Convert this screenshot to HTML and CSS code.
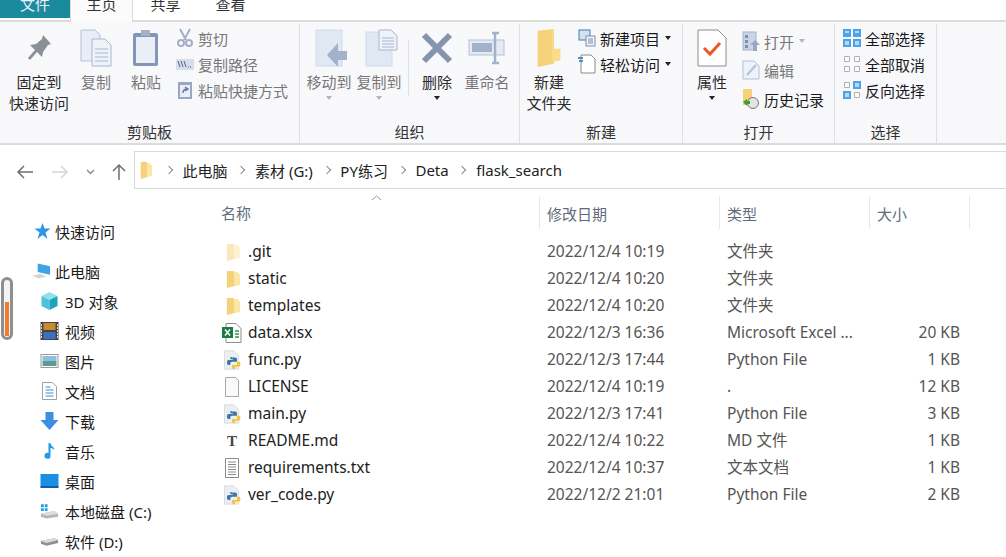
FILE: index.html
```html
<!DOCTYPE html>
<html lang="zh-CN">

<head>
  <meta charset="UTF-8">
  <title>flask_search</title>
  <link rel="stylesheet" href="styles.css">
</head>

<body>
  <svg class="defs" width="0" height="0">
    <defs>
      <symbol id="folder" viewBox="0 0 16 18" preserveAspectRatio="none">
        <path d="M1 1h8l1 2v13l-9 2z" fill="#f5d27a" />
        <path d="M9 2h5v2h2v11l-6 1z" fill="#fbe6a6" />
      </symbol>
      <symbol id="python" viewBox="0 0 24 24">
        <path d="M3 1h11l6 6v16H3z" fill="#eceef1" stroke="#d5d8dc" />
        <path d="M12 9h4a2 2 0 0 1 2 2v3h-6a2 2 0 0 0-2 2v2H8a2 2 0 0 1-2-2v-2a2 2 0 0 1 2-2h5v-1h-3v-1a1 1 0 0 1 2-1z" fill="#3a76a8" />
        <path d="M18 14h3a2 2 0 0 1 1 2v2a2 2 0 0 1-2 2h-4v1a2 2 0 0 1-4 0v-3h5a1 1 0 0 0 1-1z" fill="#f3c63f" />
      </symbol>
    </defs>
  </svg>

  <!-- tabs -->
  <div class="tabs">
    <div class="tab tabFile">文件</div>
    <div class="tab tabActive">主页</div>
    <div class="tab">共享</div>
    <div class="tab">查看</div>
  </div>

  <!-- ribbon -->
  <div class="ribbon">
    <div class="group groupClip">
      <div class="groupBody">
        <div class="bigBtn btnPin">
          <svg width="30" height="32" viewBox="0 0 30 32">
            <path d="M19 3l8 9-3 1-5 7-1 5-5-5-7 8-2-2 7-8-5-5 6-1 6-5z" fill="#8b9097" />
          </svg>
          <span>固定到<br>快速访问</span>
        </div>
        <div class="bigBtn btnWide off">
          <svg width="32" height="38" viewBox="0 0 32 38">
            <path d="M1 1h14l5 5v26H1z" fill="#e8edf6" stroke="#b6c2d6" />
            <path d="M12 10h13l6 6v21H12z" fill="#eef2f9" stroke="#a9b7cf" />
            <path d="M15 20h13M15 24h13M15 28h13M15 32h13" stroke="#a9b7cf" />
          </svg>
          <span>复制</span>
        </div>
        <div class="bigBtn btnWide off">
          <svg width="28" height="38" viewBox="0 0 28 38">
            <rect x="1" y="4" width="25" height="33" rx="2" fill="#8496b8" />
            <rect x="4" y="8" width="19" height="26" fill="#e9eef7" />
            <rect x="9" y="1" width="9" height="6" fill="#a4b1c9" />
          </svg>
          <span>粘贴</span>
        </div>
        <div class="smallCol colClip off">
          <div class="smallBtn">
            <svg width="16" height="20" viewBox="0 0 16 20">
              <path d="M3 1l6 11M13 1L7 12" stroke="#a3b0c6" stroke-width="2" fill="none" />
              <circle cx="4" cy="15" r="3" fill="none" stroke="#a3b0c6" stroke-width="2" />
              <circle cx="12" cy="15" r="3" fill="none" stroke="#a3b0c6" stroke-width="2" />
            </svg>
            <span>剪切</span>
          </div>
          <div class="smallBtn">
            <svg width="18" height="12" viewBox="0 0 18 12">
              <rect width="18" height="11" y="1" fill="#d5deec" />
              <path d="M2 3l2 6M5 3l2 6M8 3l2 6" stroke="#59657c" fill="none" />
              <path d="M12 9h1M14 9h1" stroke="#59657c" />
            </svg>
            <span>复制路径</span>
          </div>
          <div class="smallBtn">
            <svg width="16" height="20" viewBox="0 0 16 20">
              <rect x="1" y="2" width="14" height="17" fill="#98a8c4" />
              <rect x="3" y="5" width="10" height="12" fill="#e9eef7" />
              <path d="M6 13c0-3 2-4 4-4M8 7l3 2-3 2" stroke="#6b7c9c" stroke-width="1.5" fill="none" />
            </svg>
            <span>粘贴快捷方式</span>
          </div>
        </div>
      </div>
      <div class="groupName">剪贴板</div>
    </div>

    <div class="group groupOrg">
      <div class="groupBody">
        <div class="bigBtn btnOrg off">
          <svg width="34" height="38" viewBox="0 0 34 38">
            <rect x="1" y="1" width="26" height="36" fill="#dfe8f3" stroke="#d0dce9" />
            <path d="M12 26l11-12v8h9v9h-9v7z" fill="#a3b1ca" />
          </svg>
          <span>移动到</span>
          <i class="caret caretOff"></i>
        </div>
        <div class="bigBtn btnOrg off">
          <svg width="34" height="38" viewBox="0 0 34 38">
            <rect x="1" y="3" width="26" height="34" fill="#dfe8f3" stroke="#d0dce9" />
            <path d="M14 1h12l6 6v14H14z" fill="#eef2f9" stroke="#a9b7cf" />
            <path d="M17 9h12M17 12h12M17 15h12M17 18h12" stroke="#a9b7cf" />
          </svg>
          <span>复制到</span>
          <i class="caret caretOff"></i>
        </div>
        <div class="vline"></div>
        <div class="bigBtn btnOrg btnDel">
          <svg width="34" height="34" viewBox="0 0 34 34">
            <path d="M4 4l26 26M30 4L4 30" stroke="#8794ae" stroke-width="6" fill="none" />
          </svg>
          <span>删除</span>
          <i class="caret"></i>
        </div>
        <div class="bigBtn btnOrg off">
          <svg width="38" height="34" viewBox="0 0 38 34">
            <rect x="1" y="9" width="35" height="15" fill="#e4ebf5" stroke="#b4c1d6" />
            <rect x="4" y="12" width="20" height="9" fill="#a3b1ca" />
            <path d="M24 2h7M27 2v30M24 32h7" stroke="#a3b1ca" stroke-width="2.5" fill="none" />
          </svg>
          <span>重命名</span>
        </div>
      </div>
      <div class="groupName">组织</div>
    </div>

    <div class="group groupNew">
      <div class="groupBody">
        <div class="bigBtn btnFolder">
          <svg width="26" height="38" viewBox="0 0 16 23" preserveAspectRatio="none">
            <path d="M1 1l10-1v21l-10 2z" fill="#f5d27a" />
            <path d="M10 0h1v12h4v7l-5 1z" fill="#f9dd8c" />
          </svg>
          <span>新建<br>文件夹</span>
        </div>
        <div class="smallCol colNew">
          <div class="smallBtn">
            <svg width="18" height="18" viewBox="0 0 18 18">
              <rect x="1" y="1" width="11" height="10" fill="#cfe3f5" stroke="#3c7fb1" />
              <rect x="8" y="7" width="9" height="10" fill="#eef2f9" stroke="#7f8ea6" />
              <path d="M10 10h5M10 12h5M10 14h5" stroke="#7f8ea6" />
            </svg>
            <span>新建项目</span>
            <i class="caret"></i>
          </div>
          <div class="smallBtn">
            <svg width="18" height="20" viewBox="0 0 18 20">
              <path d="M3 1h10l4 4v14H3z" fill="#fff" stroke="#8c8c8c" />
              <path d="M0 4h5M1 7h4" stroke="#1c78c0" stroke-width="1.4" />
            </svg>
            <span>轻松访问</span>
            <i class="caret"></i>
          </div>
        </div>
      </div>
      <div class="groupName">新建</div>
    </div>

    <div class="group groupOpen">
      <div class="groupBody">
        <div class="bigBtn btnProp">
          <svg width="30" height="38" viewBox="0 0 30 38">
            <path d="M1 1h20l8 8v28H1z" fill="#fff" stroke="#8c8c8c" />
            <path d="M7 19l6 6 10-11" stroke="#e85a24" stroke-width="3" fill="none" />
          </svg>
          <span>属性</span>
          <i class="caret"></i>
        </div>
        <div class="smallCol colOpen">
          <div class="smallBtn off">
            <svg width="18" height="20" viewBox="0 0 18 20">
              <rect x="1" y="1" width="13" height="18" fill="#c9d4e5" stroke="#a3b1ca" />
              <path d="M3 4h3v3H3zM3 9h3v3H3zM3 14h3v3H3z" fill="#7e8faa" />
              <path d="M8 14l5-5 5 5h-3v6h-4v-6z" fill="#98a8c4" />
            </svg>
            <span>打开</span>
            <i class="caret caretOff"></i>
          </div>
          <div class="smallBtn off">
            <svg width="18" height="20" viewBox="0 0 18 20">
              <path d="M1 1h11l5 5v13H1z" fill="#eef2f9" stroke="#b4c1d6" />
              <path d="M5 15l9-10" stroke="#b4c1d6" stroke-width="2" />
            </svg>
            <span>编辑</span>
          </div>
          <div class="smallBtn">
            <svg width="18" height="20" viewBox="0 0 18 20">
              <path d="M1 0h9v16H1z" fill="#f5d27a" />
              <circle cx="11" cy="14" r="5.5" fill="#e4e4e4" stroke="#777" />
              <path d="M1 13l4-3v2h3v3H5v2z" fill="#3ba12e" />
            </svg>
            <span>历史记录</span>
          </div>
        </div>
      </div>
      <div class="groupName">打开</div>
    </div>

    <div class="group groupSel">
      <div class="groupBody">
        <div class="smallCol colSel">
          <div class="smallBtn">
            <svg width="18" height="18" viewBox="0 0 18 18">
              <path d="M0 0h8v8H0zM10 0h8v8h-8zM0 10h8v8H0zM10 10h8v8h-8z" fill="#4da3ea" />
              <path d="M2 2h4v2H2zM12 2h4v2h-4zM2 12h4v4H2zM12 12h4v4h-4z" fill="#b5d8f5" />
            </svg>
            <span>全部选择</span>
          </div>
          <div class="smallBtn">
            <svg width="18" height="18" viewBox="0 0 18 18">
              <path d="M1.500 1.500h5v5h-5zM11.500 1.500h5v5h-5zM1.500 11.500h5v5h-5zM11.500 11.500h5v5h-5z" fill="#fff" stroke="#b0b0b0" />
            </svg>
            <span>全部取消</span>
          </div>
          <div class="smallBtn">
            <svg width="18" height="18" viewBox="0 0 18 18">
              <path d="M1.500 1.500h5v5h-5zM11.500 11.500h5v5h-5z" fill="#fff" stroke="#b0b0b0" />
              <path d="M10 0h8v8h-8zM0 10h8v8H0z" fill="#4da3ea" />
              <path d="M12 2h4v4h-4zM2 12h4v4H2z" fill="#b5d8f5" />
            </svg>
            <span>反向选择</span>
          </div>
        </div>
      </div>
      <div class="groupName">选择</div>
    </div>
  </div>

  <!-- navigation -->
  <div class="navBar">
    <div class="navBtns">
      <svg width="18" height="14" viewBox="0 0 18 14">
        <path d="M17 7H2M8 1L2 7l6 6" stroke="#6f6f6f" stroke-width="1.500" fill="none" />
      </svg>
      <svg width="18" height="14" viewBox="0 0 18 14">
        <path d="M1 7h15M10 1l6 6-6 6" stroke="#d6d6d6" stroke-width="1.500" fill="none" />
      </svg>
      <svg width="9" height="6" viewBox="0 0 9 6">
        <path d="M1 1l3.500 3.500L8 1" stroke="#8a8a8a" stroke-width="1.500" fill="none" />
      </svg>
      <svg width="14" height="17" viewBox="0 0 14 17">
        <path d="M7 17V2M1 8l6-6 6 6" stroke="#6f6f6f" stroke-width="1.500" fill="none" />
      </svg>
    </div>
    <div class="address">
      <svg class="addrFolder" width="12" height="18"><use href="#folder" width="12" height="18" /></svg>
      <i class="sep"></i><span>此电脑</span>
      <i class="sep"></i><span>素材 (G:)</span>
      <i class="sep"></i><span>PY练习</span>
      <i class="sep"></i><span>Deta</span>
      <i class="sep"></i><span>flask_search</span>
    </div>
  </div>

  <div class="main">
    <!-- sidebar -->
    <div class="side">
      <div class="sideItem top">
        <svg width="18" height="16" viewBox="0 0 18 16">
          <path d="M10 0l2 5.500h6l-5 4 2 6.500-5-4-5 4 2-6.500-5-4h6z" fill="#2f95e6" />
        </svg>
        <span>快速访问</span>
      </div>
      <div class="sideItem top pc">
        <svg width="20" height="18" viewBox="0 0 20 18">
          <path d="M6 1l13 3v9L6 10z" fill="#3ea2e6" />
          <path d="M0 14l9-2 6 3-8 2z" fill="#d5d5d5" />
        </svg>
        <span>此电脑</span>
      </div>
      <div class="sideItem">
        <svg width="18" height="18" viewBox="0 0 18 18">
          <path d="M9 0l8 4-8 4-8-4z" fill="#8fe0ea" />
          <path d="M1 4l8 4v10l-8-4z" fill="#4cc4d6" />
          <path d="M17 4L9 8v10l8-4z" fill="#1ca3bd" />
        </svg>
        <span>3D 对象</span>
      </div>
      <div class="sideItem">
        <svg width="18" height="18" viewBox="0 0 18 18">
          <rect width="18" height="18" fill="#444" />
          <rect x="3" y="1" width="12" height="7" fill="#c98a2c" />
          <rect x="3" y="10" width="12" height="7" fill="#3c6fc0" />
          <path d="M1 2v14M17 2v14" stroke="#ddd" stroke-width="1" stroke-dasharray="2 1" />
        </svg>
        <span>视频</span>
      </div>
      <div class="sideItem">
        <svg width="18" height="14" viewBox="0 0 18 14">
          <rect x=".5" y=".5" width="17" height="13" fill="#fff" stroke="#9a9a9a" />
          <rect x="2" y="2" width="14" height="5" fill="#8ebfe0" />
          <rect x="2" y="7" width="14" height="5" fill="#5d9a90" />
        </svg>
        <span>图片</span>
      </div>
      <div class="sideItem">
        <svg width="16" height="18" viewBox="0 0 16 18">
          <path d="M1 .5h10l4 4v13H1z" fill="#fff" stroke="#a0a0a0" />
          <path d="M4 5h5M4 8h8M4 11h8M4 14h8" stroke="#3a8dd0" />
        </svg>
        <span>文档</span>
      </div>
      <div class="sideItem">
        <svg width="18" height="18" viewBox="0 0 18 18">
          <path d="M5 0h8v8h5l-9 10L0 8h5z" fill="#3d8ee0" />
        </svg>
        <span>下载</span>
      </div>
      <div class="sideItem">
        <svg width="18" height="18" viewBox="0 0 18 18">
          <path d="M8 1h2c0 3 4 4 4 7-1-1-2-2-4-2v8a3 3 0 1 1-2-3z" fill="#1f9be8" />
        </svg>
        <span>音乐</span>
      </div>
      <div class="sideItem">
        <svg width="18" height="14" viewBox="0 0 18 14">
          <rect width="18" height="13" fill="#1a8fe3" />
          <rect y="12" width="18" height="2" fill="#0b5fa5" />
        </svg>
        <span>桌面</span>
      </div>
      <div class="sideItem">
        <svg width="20" height="16" viewBox="0 0 20 16">
          <path d="M1 1h3v3H1zM5 1h3v3H5zM1 5h3v3H1zM5 5h3v3H5z" fill="#21a0e8" />
          <path d="M1 11l14-3 4 3v3L7 16l-6-2z" fill="#b5b5b5" />
          <path d="M1 11l6 2 12-2-4-3z" fill="#dedede" />
        </svg>
        <span>本地磁盘 (C:)</span>
      </div>
      <div class="sideItem">
        <svg width="20" height="10" viewBox="0 0 20 10">
          <path d="M1 5l14-3 4 2v3L7 10 1 8z" fill="#8f8f8f" />
          <path d="M1 5l6 2 12-3-4-2z" fill="#dcdcdc" />
        </svg>
        <span>软件 (D:)</span>
      </div>
    </div>

    <!-- file list -->
    <div class="files">
      <svg class="sortUp" width="11" height="6" viewBox="0 0 11 6">
        <path d="M1 5l4.500-4L10 5" stroke="#9a9a9a" fill="none" />
      </svg>
      <div class="row head">
        <div class="cName">名称</div>
        <div class="cDate">修改日期</div>
        <div class="cType">类型</div>
        <div class="cSize">大小</div>
      </div>
      <div class="row">
        <div class="cName"><svg class="ico icoDir faded" width="14" height="18"><use href="#folder" width="14" height="18" /></svg>.git</div>
        <div class="cDate">2022/12/4 10:19</div>
        <div class="cType">文件夹</div>
        <div class="cSize"></div>
      </div>
      <div class="row">
        <div class="cName"><svg class="ico icoDir" width="14" height="18"><use href="#folder" width="14" height="18" /></svg>static</div>
        <div class="cDate">2022/12/4 10:20</div>
        <div class="cType">文件夹</div>
        <div class="cSize"></div>
      </div>
      <div class="row">
        <div class="cName"><svg class="ico icoDir" width="14" height="18"><use href="#folder" width="14" height="18" /></svg>templates</div>
        <div class="cDate">2022/12/4 10:20</div>
        <div class="cType">文件夹</div>
        <div class="cSize"></div>
      </div>
      <div class="row">
        <div class="cName">
          <svg class="ico" width="20" height="20" viewBox="0 0 20 20">
            <path d="M4 .5h10l5 5v14H4z" fill="#fff" stroke="#8c8c8c" />
            <rect y="4" width="11" height="11" fill="#1c7a43" />
            <path d="M3 6.500l5 6M8 6.500l-5 6" stroke="#fff" stroke-width="1.500" />
            <path d="M13 7h4v2h-4zM13 10h4v2h-4zM13 13h4v2h-4z" fill="#5fae7c" />
          </svg>data.xlsx
        </div>
        <div class="cDate">2022/12/3 16:36</div>
        <div class="cType">Microsoft Excel ...</div>
        <div class="cSize">20 KB</div>
      </div>
      <div class="row">
        <div class="cName"><svg class="ico" width="20" height="20"><use href="#python" width="20" height="20" /></svg>func.py</div>
        <div class="cDate">2022/12/3 17:44</div>
        <div class="cType">Python File</div>
        <div class="cSize">1 KB</div>
      </div>
      <div class="row">
        <div class="cName">
          <svg class="ico" width="20" height="20" viewBox="0 0 20 20">
            <path d="M3.500 .5h10l3 3v16h-13z" fill="#fafafa" stroke="#a8a8a8" />
          </svg>LICENSE
        </div>
        <div class="cDate">2022/12/4 10:19</div>
        <div class="cType">.</div>
        <div class="cSize">12 KB</div>
      </div>
      <div class="row">
        <div class="cName"><svg class="ico" width="20" height="20"><use href="#python" width="20" height="20" /></svg>main.py</div>
        <div class="cDate">2022/12/3 17:41</div>
        <div class="cType">Python File</div>
        <div class="cSize">3 KB</div>
      </div>
      <div class="row">
        <div class="cName"><span class="ico icoT">T</span>README.md</div>
        <div class="cDate">2022/12/4 10:22</div>
        <div class="cType">MD 文件</div>
        <div class="cSize">1 KB</div>
      </div>
      <div class="row">
        <div class="cName">
          <svg class="ico" width="20" height="20" viewBox="0 0 20 20">
            <path d="M3.500 .5h13v19h-13z" fill="#fff" stroke="#8c8c8c" />
            <path d="M6 4h8M6 6.500h8M6 9h8M6 11.500h8M6 14h8M6 16.500h8" stroke="#8c8c8c" />
          </svg>requirements.txt
        </div>
        <div class="cDate">2022/12/4 10:37</div>
        <div class="cType">文本文档</div>
        <div class="cSize">1 KB</div>
      </div>
      <div class="row">
        <div class="cName"><svg class="ico" width="20" height="20"><use href="#python" width="20" height="20" /></svg>ver_code.py</div>
        <div class="cDate">2022/12/2 21:01</div>
        <div class="cType">Python File</div>
        <div class="cSize">2 KB</div>
      </div>
    </div>
  </div>

  <div class="pill"><div class="pillFill"></div></div>
</body>

</html>
```

FILE: styles.css
```css
html,
body {
  margin: 0;
  height: 557px;
  overflow: hidden;
}

body {
  background-color: white;
  color: #1a1a1a;
  font-family: "Noto Sans", "Noto Sans CJK SC", sans-serif;
  font-size: 15px;
  position: relative;
}

.defs {
  position: absolute;
}

svg {
  display: block;
  flex: none;
}

/* tabs */
.tabs {
  display: flex;
  height: 22px;
  box-sizing: border-box;
  border-bottom: 2px solid #dcdcdc;
}

.tab {
  width: 65px;
  height: 20px;
  line-height: 8px;
  text-align: center;
  color: #333;
}

.tabFile {
  width: 70px;
  height: 18px;
  background-color: #1b8a9c;
  color: #eef;
}

.tabActive {
  width: 63px;
  height: 22px;
  background-color: #fbfbfb;
  border-right: 1px solid #dcdcdc;
  border-left: 1px solid #dcdcdc;
  box-sizing: border-box;
  position: relative;
}

/* ribbon */
.ribbon {
  display: flex;
  height: 123px;
  box-sizing: border-box;
  background-color: #f8f9fb;
  background-image: repeating-conic-gradient(#fdfdfe 0 25%, #f2f4f8 0 50%);
  background-size: 2px 2px;
  border-bottom: 2px solid #dcdcdc;
}

.group {
  display: flex;
  flex-direction: column;
  box-sizing: border-box;
  border-right: 1px solid #dddfe2;
  margin-top: 2px;
}

.groupClip {
  width: 300px;
}

.groupOrg {
  width: 220px;
}

.groupNew {
  width: 163px;
}

.groupOpen {
  width: 152px;
}

.groupSel {
  width: 102px;
}

.groupBody {
  flex: 1;
  display: flex;
  padding-top: 5px;
}

.groupName {
  height: 22px;
  line-height: 22px;
  text-align: center;
  color: #333;
}

.bigBtn {
  display: flex;
  flex-direction: column;
  align-items: center;
  text-align: center;
  line-height: 21px;
  color: #2a2a2a;
}

.bigBtn svg {
  height: 38px;
  margin-bottom: 5px;
}

.bigBtn span {
  display: block;
  white-space: nowrap;
}

.off,
.bigBtn.off {
  color: #777;
}

.btnPin {
  width: 62px;
  margin-left: 8px;
}

.btnWide {
  width: 50px;
  margin-left: 1px;
}

.btnWide:nth-child(3) {
  margin-left: 0;
}

.btnOrg {
  width: 50px;
}

.btnOrg:first-child {
  margin-left: 4px;
}

.btnOrg:nth-child(-n+2) svg {
  margin-left: 6px;
}

.btnDel {
  margin-left: 3px;
}

.vline {
  width: 1px;
  height: 56px;
  margin: 11px 0 0 4px;
  background-color: #dddfe2;
}

.btnFolder {
  width: 50px;
  margin-left: 4px;
}

.btnProp {
  width: 50px;
  margin-left: 4px;
}

.caret {
  display: block;
  width: 0;
  height: 0;
  border-left: 3.5px solid transparent;
  border-right: 3.5px solid transparent;
  border-top: 4px solid #222;
}

.bigBtn .caret {
  margin-top: 3px;
}

.caretOff {
  border-top-color: #b5b5b5;
}

.smallCol {
  display: flex;
  flex-direction: column;
  gap: 6px;
}

.colClip {
  margin: -1px 0 0 5px;
}

.colNew {
  margin: -1px 0 0 4px;
}

.colOpen {
  margin: 2px 0 0 5px;
  gap: 9px;
}

.colSel {
  margin: -1px 0 0 8px;
}

.smallBtn {
  height: 20px;
  display: flex;
  align-items: center;
  gap: 4px;
  white-space: nowrap;
}

.smallBtn svg {
  width: 18px;
}

.smallBtn .caret {
  margin-left: 1px;
}

/* navigation */
.navBar {
  display: flex;
  height: 45px;
  box-sizing: border-box;
  padding-top: 6px;
}

.navBtns {
  width: 134px;
  height: 38px;
  box-sizing: border-box;
  padding: 3px 8px 0 16px;
  display: flex;
  align-items: center;
  justify-content: space-between;
}

.address {
  flex: 1;
  height: 38px;
  box-sizing: border-box;
  border: 1px solid #d9d9d9;
  border-right: none;
  display: flex;
  align-items: center;
  padding-left: 5px;
  gap: 10.75px;
  color: #222;
}

.addrFolder {
  margin-right: 3px;
}

.sep {
  display: block;
  width: 5px;
  height: 5px;
  border-top: 1.5px solid #8a8a8a;
  border-right: 1.5px solid #8a8a8a;
  transform: rotate(45deg);
}

/* main area */
.main {
  display: flex;
}

.side {
  width: 210px;
  flex: none;
  padding-top: 26px;
}

.sideItem {
  height: 30px;
  display: flex;
  align-items: center;
  padding-left: 40px;
  gap: 6px;
  white-space: nowrap;
}

.sideItem svg {
  width: 19px;
}

.sideItem.top {
  padding-left: 32px;
  gap: 4px;
}

.pc {
  margin-top: 10px;
}

.files {
  flex: 1;
  position: relative;
}

.sortUp {
  position: absolute;
  left: 161px;
  top: 5px;
}

.row {
  display: flex;
  height: 27px;
  line-height: 27px;
  color: #555;
  font-size: 15.5px;
}

.head {
  height: 36px;
  line-height: 36px;
  margin: 6px 0 6px;
  color: #5f6b7a;
  font-size: 15px;
}

.head > div {
  box-sizing: border-box;
  border-right: 1px solid #e8e8e8;
  height: 33px;
}

.head .cSize {
  width: 100px;
  text-align: left;
  padding: 0 0 0 7px;
}

.cName {
  width: 330px;
  padding-left: 11px;
  box-sizing: border-box;
  display: flex;
  align-items: center;
  color: #222;
}

.head .cName {
  color: #5f6b7a;
}

.cDate {
  width: 180px;
  padding-left: 7px;
  box-sizing: border-box;
}

.cType {
  width: 150px;
  padding-left: 7px;
  box-sizing: border-box;
  white-space: nowrap;
}

.cSize {
  width: 91px;
  padding-right: 1px;
  text-align: right;
  box-sizing: border-box;
}

.ico {
  flex: none;
  width: 20px;
  margin: 0 6px 0 1px;
}

.icoDir {
  width: 14px;
  margin: 0 8px 0 5px;
}

.faded {
  opacity: .5;
}

.icoT {
  display: block;
  height: 20px;
  line-height: 20px;
  text-align: center;
  font-family: "Liberation Serif", serif;
  font-weight: bold;
  font-size: 15px;
  color: #444;
}

/* pill over the sidebar */
.pill {
  position: absolute;
  left: 1px;
  top: 277px;
  width: 6px;
  height: 57px;
  border: 3px solid #8f8f8f;
  border-radius: 6px;
  background-color: #f4f4f4;
  display: flex;
  align-items: flex-end;
  justify-content: center;
}

.pillFill {
  width: 4px;
  height: 34px;
  background-color: #f47b2b;
  margin-bottom: 1px;
}
```
